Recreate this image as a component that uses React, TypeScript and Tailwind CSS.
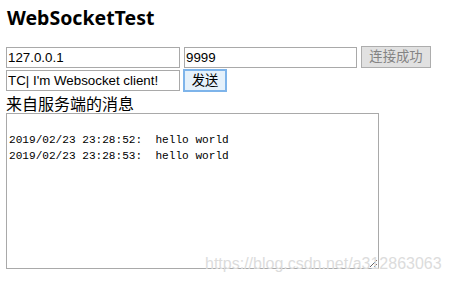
import React from 'react';

const log = '\n2019/02/23 23:28:52:  hello world\n2019/02/23 23:28:53:  hello world';

export default function App() {
    return (
        <div className="relative w-[449px] h-[283px] bg-white overflow-hidden text-black">
            {/* Title */}
            <h1
                className="pl-[7px] pt-[5px] h-[46px] text-[19.5px] font-bold leading-[26px]"
                style={{ fontFamily: "'Noto Sans', 'Noto Sans CJK SC', sans-serif" }}
            >
                WebSocketTest
            </h1>

            <div
                className="pl-[6px] flex flex-col"
                style={{ fontFamily: "'Liberation Sans', 'Noto Sans CJK SC', sans-serif" }}
            >
                {/* Row 1 */}
                <div className="flex items-end h-[22px]">
                    <input
                        defaultValue="127.0.0.1"
                        className="w-[174px] h-[21px] border border-[#a9a9a9] px-[1px] text-[13.33px] outline-none"
                    />
                    <input
                        defaultValue="9999"
                        className="ml-[4px] w-[173px] h-[21px] border border-[#a9a9a9] px-[1px] text-[13.33px] outline-none"
                    />
                    <button
                        disabled
                        className="ml-[4px] w-[70px] h-[22px] border border-[#adadad] bg-[#e1e1e1] text-[#838383] text-[13.33px] leading-none"
                    >
                        连接成功
                    </button>
                </div>

                {/* Row 2 */}
                <div className="flex items-center h-[23px] mt-[1px]">
                    <input
                        defaultValue="TC| I'm Websocket client!"
                        className="w-[174px] h-[21px] border border-[#a9a9a9] px-[1px] text-[13.33px] outline-none"
                    />
                    <button className="ml-[3px] w-[44px] h-[23px] border-2 border-[#7eb4ea] bg-[#e5f1fb] text-[13.33px] leading-none">
                        发送
                    </button>
                </div>

                {/* Label */}
                <div
                    className="h-[21px] pt-[1px] text-[16px] leading-[20px]"
                    style={{ fontFamily: "'Noto Sans CJK SC', sans-serif" }}
                >
                    来自服务端的消息
                </div>

                {/* Messages */}
                <textarea
                    readOnly
                    value={log}
                    className="w-[373px] h-[156px] border border-[#a9a9a9] p-[2px] text-[11.1px] leading-[16px] outline-none"
                    style={{ fontFamily: "'Liberation Mono', monospace" }}
                />
            </div>

            {/* Watermark */}
            <div
                className="absolute left-[205px] top-[256px] text-[16px] text-[#dcdcdc] leading-none"
                style={{ fontFamily: "'Liberation Sans', sans-serif" }}
            >
                https://blog.csdn.net/a312863063
            </div>
        </div>
    );
}
